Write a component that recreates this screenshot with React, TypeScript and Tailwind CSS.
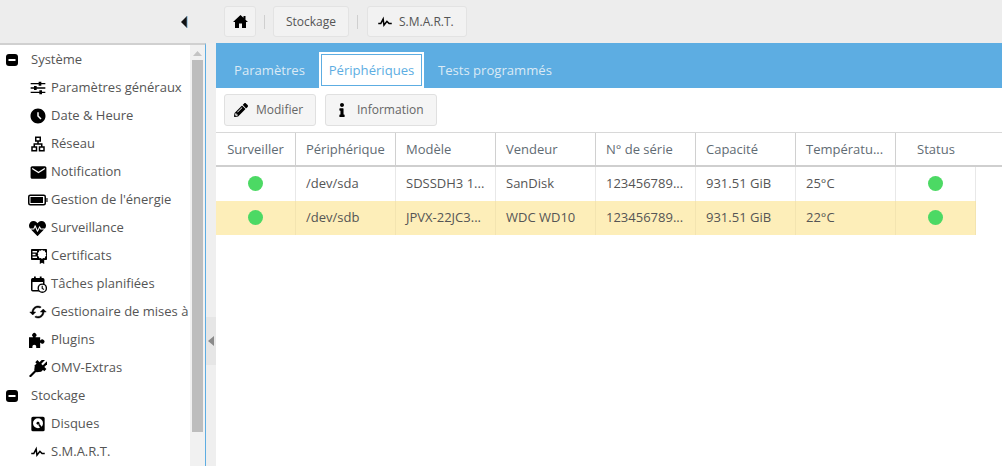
import React from "react";
import { FaHeartbeat, FaPencilAlt, FaInfo } from "react-icons/fa";
import { MdOutlineLan, MdEmail, MdAccessTimeFilled } from "react-icons/md";

const font = { fontFamily: '"Open Sans", sans-serif' };

const Svg = ({ children, w = 16, h = 16, vb = "0 0 24 24" }: { children: React.ReactNode; w?: number; h?: number; vb?: string }) => (
  <svg width={w} height={h} viewBox={vb} fill="black" className="shrink-0">{children}</svg>
);

const Minus = () => (
  <svg width={12} height={12} viewBox="0 0 12 12" className="shrink-0">
    <rect width="12" height="12" rx="3" fill="black" />
    <rect x="2.5" y="5" width="7" height="2" fill="white" />
  </svg>
);

const Pulse = () => (
  <svg width={18} height={18} viewBox="0 0 24 24" className="shrink-0 -ml-[1px]">
    <path d="M3,13H5.79L10.1,4.79L11.28,13.75L14.5,9.66L17.83,13H21V15H17L14.67,12.67L9.92,18.73L8.94,11.31L7,15H3V13Z" fill="black" />
  </svg>
);

const icons: Record<string, React.ReactNode> = {
  sliders: (
    <Svg>
      <path d="M1 4.500h22v2H1zM1 11h22v2H1zM1 17.500h22v2H1z" />
      <path d="M13 2.500h4v6h-4zM6 9h4v6H6zM14 15.500h4v6h-4z" />
    </Svg>
  ),
  clock: <MdAccessTimeFilled size={18} className="shrink-0 -ml-[1px]" color="black" />,
  net: <MdOutlineLan size={18} className="shrink-0 -ml-[1px]" color="black" />,
  mail: <MdEmail size={19} className="shrink-0 -ml-[1px]" color="black" />,
  battery: (
    <svg width={20} height={12} viewBox="0 0 20 12" className="shrink-0 -ml-0.5 -mr-0.5">
      <rect x="0.75" y="1.25" width="16.5" height="9.500" rx="1.500" fill="none" stroke="black" strokeWidth="1.500" />
      <rect x="2.500" y="3" width="12.500" height="6" fill="black" />
      <rect x="18.400" y="4" width="1.100" height="4" fill="black" />
    </svg>
  ),
  heart: <FaHeartbeat size={17} className="shrink-0 -ml-[1px]" color="black" />,
  cert: (
    <svg width={16} height={16} viewBox="0 0 16 16" className="shrink-0 ml-px">
      <rect x="0" y="1" width="16" height="11" rx="0.800" fill="black" />
      <path d="M1.500 3h4.500v1.400H1.500zM1.500 5.800h3v1.400h-3zM1.500 8.600h4.500v1.400H1.500z" fill="white" />
      <path d="M11 1.800l1.200 1 1.500-.2.400 1.500 1.200.9-.6 1.400.6 1.400-1.200.9-.4 1.500-1.500-.2-1.200 1-1.200-1-1.500.2-.4-1.500-1.200-.9.6-1.400-.6-1.400 1.200-.9.4-1.500 1.500.2z" fill="white" />
      <path d="M8.800 11.500h4.400v4.500L11 14.700 8.800 16z" fill="black" />
    </svg>
  ),
  cal: (
    <svg width={16} height={17} viewBox="0 0 16 17" className="shrink-0 ml-px">
      <rect x="0.750" y="2.750" width="12" height="12" rx="1" fill="none" stroke="black" strokeWidth="1.500" />
      <path d="M1 2.500h11.500V6H1z" fill="black" />
      <path d="M3 0.500h1.800v3H3zM8.800 0.500h1.800v3H8.800z" fill="black" />
      <circle cx="11.300" cy="12.200" r="4.100" fill="white" stroke="black" strokeWidth="1.400" />
      <path d="M11.200 9.800v2.600l1.800 1.100" fill="none" stroke="black" strokeWidth="1.100" />
    </svg>
  ),
  sync: (
    <svg width={18} height={18} viewBox="0 0 24 24" className="shrink-0 -ml-[1px]">
      <path d="M19 8l-4 4h3c0 3.310-2.690 6-6 6-1.010 0-1.970-.25-2.800-.7l-1.460 1.460C8.970 19.540 10.430 20 12 20c4.420 0 8-3.580 8-8h3l-4-4zM6 12c0-3.310 2.690-6 6-6 1.010 0 1.970.25 2.800.7l1.460-1.460C15.030 4.460 13.570 4 12 4c-4.420 0-8 3.580-8 8H1l4 4 4-4H6z" fill="black" stroke="black" strokeWidth="0.600" />
    </svg>
  ),
  puzzle: (
    <svg width={17} height={17} viewBox="0 0 16 16" className="shrink-0 -ml-[1px]">
      <path d="M3.800 4.500a2 2 0 1 1 2.400 0V5H10.500v2.800h.4a2 2 0 1 1 0 2.400h-.4V15H6.800v-1.300a1.800 1.800 0 0 0-3.600 0V15H0V5h3.800z" fill="black" />
    </svg>
  ),
  plug: (
    <svg width={18} height={17} viewBox="0 0 17 16" className="shrink-0 -ml-[1px]">
      <g transform="rotate(45 8.500 8)">
        <rect x="5.300" y="-2.500" width="2.200" height="6" fill="black" />
        <rect x="9.500" y="-2.500" width="2.200" height="6" fill="black" />
        <rect x="2.500" y="2.800" width="12" height="2.800" fill="black" />
        <path d="M4.300 5h8.400v3L10 11.500H7L4.300 8z" fill="black" />
        <rect x="7.500" y="10" width="2" height="9" fill="black" />
      </g>
    </svg>
  ),
  disk: (
    <Svg>
      <path fillRule="evenodd" d="M4.500 1h15A2.500 2.500 0 0 1 22 3.500v17a2.500 2.500 0 0 1-2.500 2.500h-15A2.500 2.500 0 0 1 2 20.500v-17A2.500 2.500 0 0 1 4.500 1zM12 3.500a7.500 7.500 0 1 0 0 15 7.500 7.500 0 0 0 0-15z" />
      <circle cx="12" cy="11" r="2.200" />
      <path d="M12.500 13.500l2-1.500 5 7-2.500 2z" />
    </Svg>
  ),
  smart: <Pulse />,
};

const Item = ({ icon, label }: { icon: string; label: string }) => (
  <div className="h-7 flex items-center pl-[30px] whitespace-nowrap">
    <span className="w-[21px] shrink-0 flex items-center">{icons[icon]}</span>
    <span>{label}</span>
  </div>
);

const Group = ({ label }: { label: string }) => (
  <div className="h-7 flex items-center pl-1.5">
    <span className="w-[25px] shrink-0 flex items-center"><Minus /></span>
    <span>{label}</span>
  </div>
);

const Crumb = ({ children, className }: { children: React.ReactNode; className: string }) => (
  <div className={`h-[31px] flex items-center rounded-[3px] border border-[#e3e3e3] bg-[#f2f2f2] text-[12px] text-[#555] ${className}`}>{children}</div>
);

const Sep = ({ className = "mx-2" }: { className?: string }) => <div className={`w-px h-[14px] bg-[#cfcfcf] ${className}`} />;

const ToolBtn = ({ icon, label, className }: { icon: React.ReactNode; label: string; className: string }) => (
  <div className={`h-8 flex items-center rounded-[3px] border border-[#e0e0e0] bg-[#f5f5f5] text-[#666] text-[12px] ${className}`}>{icon}<span>{label}</span></div>
);

const cols = ["Surveiller", "Périphérique", "Modèle", "Vendeur", "N° de série", "Capacité", "Températu...", "Status"];
const widths = ["w-[80px]", "w-[100px]", "w-[100px]", "w-[100px]", "w-[100px]", "w-[100px]", "w-[100px]", "w-[80px]"];

const Dot = () => <span className="block w-[15px] h-[15px] rounded-full bg-[#4cd964] mx-auto mb-px" />;

const Row = ({ cells, selected }: { cells: string[]; selected?: boolean }) => (
  <div className={`flex h-[34px] items-center w-[760px] ${selected ? "bg-[#fdeeb9]" : "bg-white"}`}>
    {[null, ...cells, null].map((c, i) => (
      <div key={i} className={`${widths[i]} h-full flex items-center pl-2.5 border-r ${selected ? "border-[#f3e4b0]" : "border-[#e8e8e8]"}`}>
        {c === null ? <div className="w-full pr-2.5"><Dot /></div> : <span>{c}</span>}
      </div>
    ))}
  </div>
);

export default function App() {
  return (
    <div style={font} className="w-[1002px] h-[466px] overflow-hidden bg-white text-[13px] text-[#555] flex flex-col">
      <header className="h-[43px] shrink-0 bg-[#ededed] flex items-center">
        <div className="w-[224px] shrink-0 flex justify-end pr-[36px]">
          <svg width={7} height={12} viewBox="0 0 7 12"><path d="M6 0v12L0 6z" fill="#111" /><rect x="5.500" y="0" width="1.500" height="12" fill="#7fb2d6" opacity="0.6" /></svg>
        </div>
        <div className="flex items-center">
          <Crumb className="w-[32px] justify-center">
            <svg width={15} height={13} viewBox="0 0 15 13"><path d="M7.500 0 10.500 2.800V1H12.500V4.700L15 7H13V13H9V8.500H6V13H2V7H0z" fill="black" /></svg>
          </Crumb>
          <Sep />
          <Crumb className="w-[76px] justify-center">Stockage</Crumb>
          <Sep className="ml-2 mr-[9px]" />
          <Crumb className="w-[100px] pl-[9px] gap-[5px]"><Pulse /><span>S.M.A.R.T.</span></Crumb>
        </div>
      </header>
      <div className="flex-1 flex min-h-0">
        <aside className="w-[206px] shrink-0 flex border-t-2 border-[#d0d0d0] border-r border-r-[#5dade2] bg-white">
          <nav className="w-[190px] shrink-0 overflow-hidden pt-[1px]">
            <Group label="Système" />
            <Item icon="sliders" label="Paramètres généraux" />
            <Item icon="clock" label="Date & Heure" />
            <Item icon="net" label="Réseau" />
            <Item icon="mail" label="Notification" />
            <Item icon="battery" label="Gestion de l'énergie" />
            <Item icon="heart" label="Surveillance" />
            <Item icon="cert" label="Certificats" />
            <Item icon="cal" label="Tâches planifiées" />
            <Item icon="sync" label="Gestionaire de mises à" />
            <Item icon="puzzle" label="Plugins" />
            <Item icon="plug" label="OMV-Extras" />
            <Group label="Stockage" />
            <Item icon="disk" label="Disques" />
            <Item icon="smart" label="S.M.A.R.T." />
          </nav>
          <div className="w-[15px] shrink-0 bg-[#f1f1f1] flex flex-col items-center pt-[6px]">
            <svg width={9} height={5} viewBox="0 0 9 5"><path d="M4.500 0 9 5H0z" fill="#c4c4c4" /></svg>
            <div className="w-[11px] h-[372px] mt-[4px] bg-[#bdbdbd] shrink-0" />
          </div>
        </aside>
        <div className="w-[10px] shrink-0 bg-[#efefef] pt-[274px]">
          <div className="w-full h-12 bg-[#e6e6e6] flex items-center justify-center">
            <svg width={6} height={10} viewBox="0 0 6 10"><path d="M6 0v10L0 5z" fill="#8a8a8a" /></svg>
          </div>
        </div>
        <main className="flex-1 min-w-0 bg-white flex flex-col">
          <div className="h-[45px] shrink-0 bg-[#5dade2] flex items-end pl-1 text-[13.1px]">
            <div className="h-[35px] w-[99px] flex items-center justify-center text-[#dbeaf5]">Paramètres</div>
            <div className="h-[36px] w-[105px] flex items-center justify-center border-[2px] border-white border-b-0 bg-white text-[#5dade2] outline outline-1 outline-[#5dade2] -outline-offset-[3px]">Périphériques</div>
            <div className="h-[35px] pl-[14px] flex items-center text-[#dbeaf5]">Tests programmés</div>
          </div>
          <div className="h-[44px] shrink-0 flex items-center pl-2 gap-[9px]">
            <ToolBtn className="w-[92px]" label="Modifier" icon={<span className="w-[31px] flex justify-center pl-[1px]"><FaPencilAlt size={14} color="black" /></span>} />
            <ToolBtn className="w-[112px]" label="Information" icon={<span className="w-[31px] flex justify-center pl-[1px]"><FaInfo size={14} color="black" /></span>} />
          </div>
          <div className="h-[35px] shrink-0 flex border-t-[1px] border-b-[2px] border-t-[#d8d8d8] border-b-[#cfcfcf] pt-[2px]">
            {cols.map((c, i) => (
              <div key={c} className={`${widths[i]} shrink-0 flex items-center ${i === 0 || i === 7 ? "justify-center" : "pl-2.5"} ${i < 7 ? "border-r border-[#d0d0d0] -mt-[2px] pt-[2px]" : ""} text-[#5f6b73]`}>{c}</div>
            ))}
          </div>
          <Row cells={["/dev/sda", "SDSSDH3 1...", "SanDisk", "123456789...", "931.51 GiB", "25°C"]} />
          <Row selected cells={["/dev/sdb", "JPVX-22JC3...", "WDC WD10", "123456789...", "931.51 GiB", "22°C"]} />
        </main>
      </div>
    </div>
  );
}
